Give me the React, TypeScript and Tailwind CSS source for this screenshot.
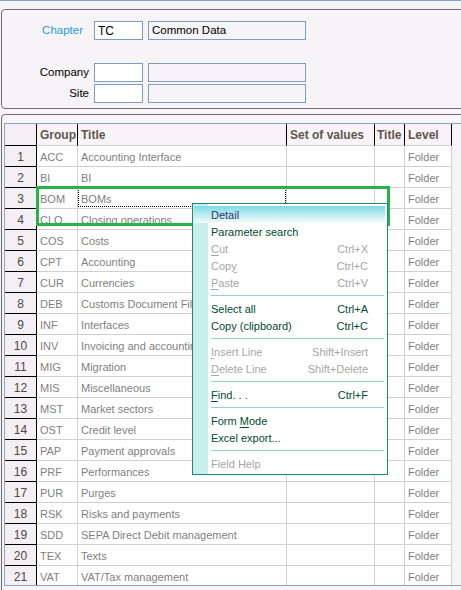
import React from "react";

const rows: [string, string][] = [
  ["ACC", "Accounting Interface"],
  ["BI", "BI"],
  ["BOM", "BOMs"],
  ["CLO", "Closing operations"],
  ["COS", "Costs"],
  ["CPT", "Accounting"],
  ["CUR", "Currencies"],
  ["DEB", "Customs Document File"],
  ["INF", "Interfaces"],
  ["INV", "Invoicing and accounting"],
  ["MIG", "Migration"],
  ["MIS", "Miscellaneous"],
  ["MST", "Market sectors"],
  ["OST", "Credit level"],
  ["PAP", "Payment approvals"],
  ["PRF", "Performances"],
  ["PUR", "Purges"],
  ["RSK", "Risks and payments"],
  ["SDD", "SEPA Direct Debit management"],
  ["TEX", "Texts"],
  ["VAT", "VAT/Tax management"],
];

type MenuItem =
  | { sep: true }
  | {
      sep?: false;
      label: React.ReactNode;
      shortcut?: string;
      disabled?: boolean;
      hl?: boolean;
    };

const U = ({ children }: { children: React.ReactNode }) => (
  <span className="underline underline-offset-[2px]">{children}</span>
);

const menu: MenuItem[] = [
  { label: "Detail", hl: true },
  { label: "Parameter search" },
  { label: <><U>C</U>ut</>, shortcut: "Ctrl+X", disabled: true },
  { label: <>Cop<U>y</U></>, shortcut: "Ctrl+C", disabled: true },
  { label: <><U>P</U>aste</>, shortcut: "Ctrl+V", disabled: true },
  { sep: true },
  { label: "Select all", shortcut: "Ctrl+A" },
  { label: "Copy (clipboard)", shortcut: "Ctrl+C" },
  { sep: true },
  { label: <><U>I</U>nsert Line</>, shortcut: "Shift+Insert", disabled: true },
  { label: <><U>D</U>elete Line</>, shortcut: "Shift+Delete", disabled: true },
  { sep: true },
  { label: <><U>F</U>ind. . .</>, shortcut: "Ctrl+F" },
  { sep: true },
  { label: <>Form <U>M</U>ode</> },
  { label: "Excel export..." },
  { sep: true },
  { label: "Field Help", disabled: true },
];

export default function App() {
  return (
    <div className="relative w-[461px] h-[590px] overflow-hidden bg-[#f7f4f7] font-['Liberation_Sans',Arial,sans-serif] text-[11px]">
      <div className="h-px bg-[#8aa6c4]" />

      {/* Top form panel */}
      <div className="mt-[8px] ml-px -mr-4 h-[100px] box-border border border-[#6e6e6e] rounded-[4px]">
        <div className="mt-[11px] flex items-center h-[19px]">
          <div className="w-[87px] pr-[6px] pt-px text-right text-[#1e9be6] text-[11.5px]">Chapter</div>
          <div className="ml-[5px] w-[49px] h-[19px] box-border border border-[#7f9db9] bg-white flex items-center pl-[3px] pt-px text-[12px] text-black">
            TC
          </div>
          <div className="ml-[5px] w-[158px] h-[19px] box-border border border-[#7f9db9] flex items-center pl-[3px] pt-px text-[11.5px] text-black">
            Common Data
          </div>
        </div>
        <div className="mt-[23px] flex items-center h-[19px]">
          <div className="w-[87px] pt-px text-right text-black text-[11.5px]">Company</div>
          <div className="ml-[5px] w-[49px] h-[19px] box-border border border-[#7f9db9] bg-white" />
          <div className="ml-[5px] w-[158px] h-[19px] box-border border border-[#7f9db9]" />
        </div>
        <div className="mt-[2px] flex items-center h-[19px]">
          <div className="w-[87px] pt-px text-right text-black text-[11.5px]">Site</div>
          <div className="ml-[5px] w-[49px] h-[19px] box-border border border-[#7f9db9] bg-white" />
          <div className="ml-[5px] w-[158px] h-[19px] box-border border border-[#7f9db9]" />
        </div>
      </div>

      {/* Grid panel */}
      <div className="mt-[5px] ml-px -mr-4 h-[500px] box-border border border-[#6e6e6e] rounded-tl-[4px] pt-[8px] pl-[2px]">
        <div className="h-[463px] box-border border-t border-l border-b border-[#8aa6c4] overflow-hidden">
          {/* Header */}
          <div className="flex h-[22px] text-[12px] font-bold text-[#5f574f]">
            <div className="w-[32px] box-border border-r border-b border-black bg-[#f4eff2]" />
            <div className="w-[41px] box-border border-r border-black border-b border-b-[#d0d0d0] bg-[#f7f3f6] pl-[3px] pt-px flex items-center">Group</div>
            <div className="w-[209px] box-border border-r border-black border-b border-b-[#d0d0d0] bg-[#f7f3f6] pl-[3px] pt-px flex items-center">Title</div>
            <div className="w-[88px] box-border border-r border-black border-b border-b-[#d0d0d0] bg-[#f7f3f6] pl-[3px] pt-px flex items-center">Set of values</div>
            <div className="w-[30px] box-border border-r border-black border-b border-b-[#d0d0d0] bg-[#f7f3f6] pl-[2px] pt-px flex items-center overflow-hidden">Title</div>
            <div className="w-[47px] box-border border-r border-black border-b border-b-[#d0d0d0] bg-[#f7f3f6] pl-[3px] pt-px flex items-center">Level</div>
          </div>
          {rows.map(([code, title], i) => (
            <div key={code} className="flex h-[21px] text-[11px] text-[#7f7f7f]">
              <div className="w-[32px] box-border border-r border-b border-black bg-[#f4eff2] flex items-center justify-center pt-px text-[12px] text-[#4a4a4a]">
                {i + 1}
              </div>
              <div className="w-[41px] box-border border-r border-b border-[#d0d0d0] bg-white pl-[3px] pt-[2px] flex items-center whitespace-nowrap overflow-hidden">
                {code}
              </div>
              <div className="relative w-[209px] box-border border-r border-b border-[#d0d0d0] bg-white pl-[3px] pt-[2px] flex items-center whitespace-nowrap overflow-hidden">
                {title}
                {i === 2 && (
                  <>
                    <div className="absolute left-0 top-0 w-[208px] h-px bg-[repeating-linear-gradient(90deg,#000_0_1px,#fff_1px_2px)]" />
                    <div className="absolute left-0 top-[18px] w-[208px] h-px bg-[repeating-linear-gradient(90deg,#000_0_1px,#fff_1px_2px)]" />
                    <div className="absolute left-0 top-0 w-px h-[19px] bg-[repeating-linear-gradient(180deg,#000_0_1px,#fff_1px_2px)]" />
                    <div className="absolute left-[207px] top-0 w-px h-[19px] bg-[repeating-linear-gradient(180deg,#000_0_1px,#fff_1px_2px)]" />
                  </>
                )}
              </div>
              <div className="w-[88px] box-border border-r border-b border-[#d0d0d0] bg-white" />
              <div className="w-[30px] box-border border-r border-b border-[#d0d0d0] bg-white" />
              <div className="w-[47px] box-border border-r border-b border-[#d0d0d0] bg-white pl-[3px] pt-[2px] flex items-center">
                Folder
              </div>
            </div>
          ))}
        </div>
      </div>

      {/* Green selection rectangle */}
      <div className="absolute left-[36px] top-[186px] w-[354px] h-[40px] box-border border-[3px] border-[#27b24a]" />

      {/* Context menu */}
      <div className="absolute left-[192px] top-[203px] w-[196px] h-[272px] box-border border border-[#1f8a6e] bg-white text-[11px]">
        <div className="absolute left-0 top-0 bottom-0 w-[15px] bg-[#c8eeee]" />
        <div className="relative pt-[2px]">
          {menu.map((m, i) =>
            m.sep ? (
              <div key={i} className="h-[9px] flex items-center ml-[18px] mr-[3px]">
                <div className="h-px w-full bg-[#8fd3c8]" />
              </div>
            ) : (
              <div
                key={i}
                className={
                  "h-[17px] pt-px flex items-center justify-between pr-[19px] " +
                  (m.hl
                    ? "ml-px mr-[2px] pl-[17px] bg-linear-to-b from-[#7cd9e5] to-[#f4fbfb] text-[#1f3a68]"
                    : "pl-[18px] " + (m.disabled ? "text-[#a6a6a6]" : "text-[#004a33]"))
                }
              >
                <span className="whitespace-nowrap">{m.label}</span>
                {m.shortcut && <span className="whitespace-nowrap">{m.shortcut}</span>}
              </div>
            )
          )}
        </div>
      </div>
    </div>
  );
}
